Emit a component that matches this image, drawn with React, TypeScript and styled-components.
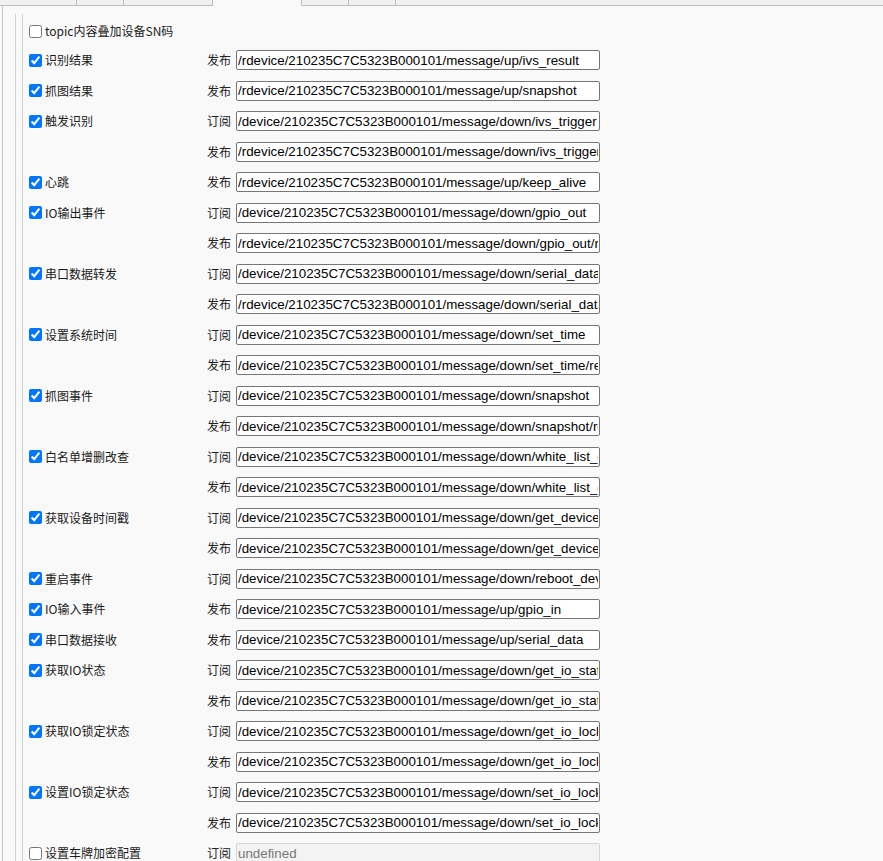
import React from "react";
import styled, { createGlobalStyle } from "styled-components";

const GlobalStyle = createGlobalStyle`
  html, body {
    margin: 0;
    padding: 0;
    background: #f9f9f9;
    overflow: hidden;
  }
  body {
    font-family: "Noto Sans CJK SC", "Noto Sans", sans-serif;
    color: #1a1a1a;
  }
`;

const Page = styled.div`
  display: flex;
  flex-direction: column;
  min-height: 100vh;
  background: #f9f9f9;
`;

const TabBar = styled.div`
  display: flex;
  height: 6px;
  background: #f0f0f0;
`;

const Tab = styled.div<{ $w: number; $active?: boolean }>`
  box-sizing: border-box;
  width: ${(p) => p.$w}px;
  flex: none;
  border-right: 1px solid #bdbdbd;
  border-bottom: 1px solid ${(p) => (p.$active ? "transparent" : "#bdbdbd")};
  background: ${(p) => (p.$active ? "#f9f9f9" : "#f0f0f0")};
`;

const TabFill = styled.div`
  flex: 1;
  border-bottom: 1px solid #bdbdbd;
`;

const Panel = styled.div`
  flex: 1;
  display: flex;
  margin-left: 2px;
  border-left: 1px solid #c8c8c8;
  padding-left: 12px;
`;

const FieldSet = styled.div`
  flex: 1;
  display: flex;
  margin-top: 8px;
  border-left: 1px solid #d2d2d2;
  padding-left: 6px;
`;

const Inner = styled.div`
  flex: 1;
  border-left: 1px solid #d2d2d2;
  padding-left: 6px;
  padding-top: 4px;
`;

const TopRow = styled.div`
  height: 27px;
  padding-bottom: 1px;
  box-sizing: border-box;
  display: flex;
  align-items: center;
`;

const Check = styled.input.attrs({ type: "checkbox" })`
  width: 13px;
  height: 13px;
  margin: 0 3px 0 0;
  flex: none;
`;

const LabelText = styled.span`
  font-size: 12px;
  line-height: 16px;
  white-space: nowrap;
`;

const Group = styled.div`
  display: grid;
  grid-template-columns: 178px 1fr;
`;

const LabelCell = styled.label`
  height: 30.5px;
  display: flex;
  align-items: center;
`;

const SubRows = styled.div`
  display: flex;
  flex-direction: column;
`;

const SubRow = styled.div`
  height: 30.5px;
  display: flex;
  align-items: center;
`;

const Kind = styled.span`
  width: 24px;
  margin-right: 5px;
  font-size: 12px;
  line-height: 16px;
  color: #222;
  white-space: nowrap;
`;

const Topic = styled.input`
  box-sizing: border-box;
  width: 364px;
  height: 20px;
  margin: 0;
  padding: 0 1px;
  border: 1px solid #767676;
  border-radius: 2px;
  background: #fff;
  color: #000;
  font-family: "Liberation Sans", Arial, sans-serif;
  font-size: 13.333px;
  outline: none;

  &:disabled {
    background: #f3f3f3;
    border-color: #d6d6d6;
    color: #777;
  }
`;

type Sub = { kind: "发布" | "订阅"; value: string };
type Item = { name: string; checked: boolean; subs: Sub[]; disabled?: boolean };

const SN = "210235C7C5323B000101";
const d = (s: string) => `/device/${SN}/message/${s}`;
const r = (s: string) => `/rdevice/${SN}/message/${s}`;

const items: Item[] = [
  { name: "识别结果", checked: true, subs: [{ kind: "发布", value: r("up/ivs_result") }] },
  { name: "抓图结果", checked: true, subs: [{ kind: "发布", value: r("up/snapshot") }] },
  {
    name: "触发识别",
    checked: true,
    subs: [
      { kind: "订阅", value: d("down/ivs_trigger") },
      { kind: "发布", value: r("down/ivs_trigger/reply") },
    ],
  },
  { name: "心跳", checked: true, subs: [{ kind: "发布", value: r("up/keep_alive") }] },
  {
    name: "IO输出事件",
    checked: true,
    subs: [
      { kind: "订阅", value: d("down/gpio_out") },
      { kind: "发布", value: r("down/gpio_out/reply") },
    ],
  },
  {
    name: "串口数据转发",
    checked: true,
    subs: [
      { kind: "订阅", value: d("down/serial_data") },
      { kind: "发布", value: r("down/serial_data/reply") },
    ],
  },
  {
    name: "设置系统时间",
    checked: true,
    subs: [
      { kind: "订阅", value: d("down/set_time") },
      { kind: "发布", value: d("down/set_time/reply") },
    ],
  },
  {
    name: "抓图事件",
    checked: true,
    subs: [
      { kind: "订阅", value: d("down/snapshot") },
      { kind: "发布", value: d("down/snapshot/reply") },
    ],
  },
  {
    name: "白名单增删改查",
    checked: true,
    subs: [
      { kind: "订阅", value: d("down/white_list_operator") },
      { kind: "发布", value: d("down/white_list_operator/reply") },
    ],
  },
  {
    name: "获取设备时间戳",
    checked: true,
    subs: [
      { kind: "订阅", value: d("down/get_device_time") },
      { kind: "发布", value: d("down/get_device_time/reply") },
    ],
  },
  { name: "重启事件", checked: true, subs: [{ kind: "订阅", value: d("down/reboot_device") }] },
  { name: "IO输入事件", checked: true, subs: [{ kind: "发布", value: d("up/gpio_in") }] },
  { name: "串口数据接收", checked: true, subs: [{ kind: "发布", value: d("up/serial_data") }] },
  {
    name: "获取IO状态",
    checked: true,
    subs: [
      { kind: "订阅", value: d("down/get_io_status") },
      { kind: "发布", value: d("down/get_io_status/reply") },
    ],
  },
  {
    name: "获取IO锁定状态",
    checked: true,
    subs: [
      { kind: "订阅", value: d("down/get_io_lock_status") },
      { kind: "发布", value: d("down/get_io_lock_status/reply") },
    ],
  },
  {
    name: "设置IO锁定状态",
    checked: true,
    subs: [
      { kind: "订阅", value: d("down/set_io_lock_status") },
      { kind: "发布", value: d("down/set_io_lock_status/reply") },
    ],
  },
  {
    name: "设置车牌加密配置",
    checked: false,
    disabled: true,
    subs: [{ kind: "订阅", value: "undefined" }],
  },
];

const tabs = [77, 47, 89, 89, 47, 47];

export default function App() {
  return (
    <Page>
      <GlobalStyle />
      <TabBar>
        {tabs.map((w, i) => (
          <Tab key={i} $w={w} $active={i === 3} />
        ))}
        <TabFill />
      </TabBar>
      <Panel>
        <FieldSet>
          <Inner>
            <TopRow>
              <Check defaultChecked={false} />
              <LabelText>topic内容叠加设备SN码</LabelText>
            </TopRow>
            {items.map((it) => (
              <Group key={it.name}>
                <LabelCell>
                  <Check defaultChecked={it.checked} />
                  <LabelText>{it.name}</LabelText>
                </LabelCell>
                <SubRows>
                  {it.subs.map((s, i) => (
                    <SubRow key={i}>
                      <Kind>{s.kind}</Kind>
                      <Topic defaultValue={s.value} disabled={it.disabled} readOnly />
                    </SubRow>
                  ))}
                </SubRows>
              </Group>
            ))}
          </Inner>
        </FieldSet>
      </Panel>
    </Page>
  );
}
